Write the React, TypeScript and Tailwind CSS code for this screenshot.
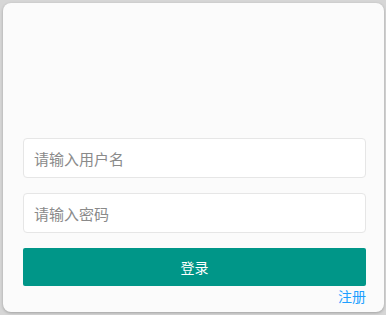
import React from "react";

export default function App() {
  const font = { fontFamily: '"Noto Sans CJK SC", "Liberation Sans", sans-serif' };
  return (
    <div className="w-[386px] h-[315px] bg-[#d6d6d6] pt-[3px] pl-[3px] overflow-hidden" style={font}>
      <div className="w-[381px] h-[309px] rounded-[8px] bg-[#fbfbfb] shadow-[0_1px_3px_rgba(0,0,0,0.25)] pt-[135px] px-[20px] flex flex-col">
        <input
          className="h-[40px] w-[343px] border border-[#e6e6e6] rounded-[4px] bg-white px-[10px] text-[15px] outline-none placeholder:text-[#8a8a8a]"
          placeholder="请输入用户名"
        />
        <input
          type="password"
          className="mt-[15px] h-[40px] w-[343px] border border-[#e6e6e6] rounded-[4px] bg-white px-[10px] text-[15px] outline-none placeholder:text-[#8a8a8a]"
          placeholder="请输入密码"
        />
        <button className="mt-[15px] h-[38px] w-[343px] rounded-[2px] bg-[#009688] text-white text-[14px]">
          登录
        </button>
        <div className="w-[343px] flex justify-end">
          <a className="text-[14px] leading-[20px] text-[#1e9fff] cursor-pointer">注册</a>
        </div>
      </div>
    </div>
  );
}
